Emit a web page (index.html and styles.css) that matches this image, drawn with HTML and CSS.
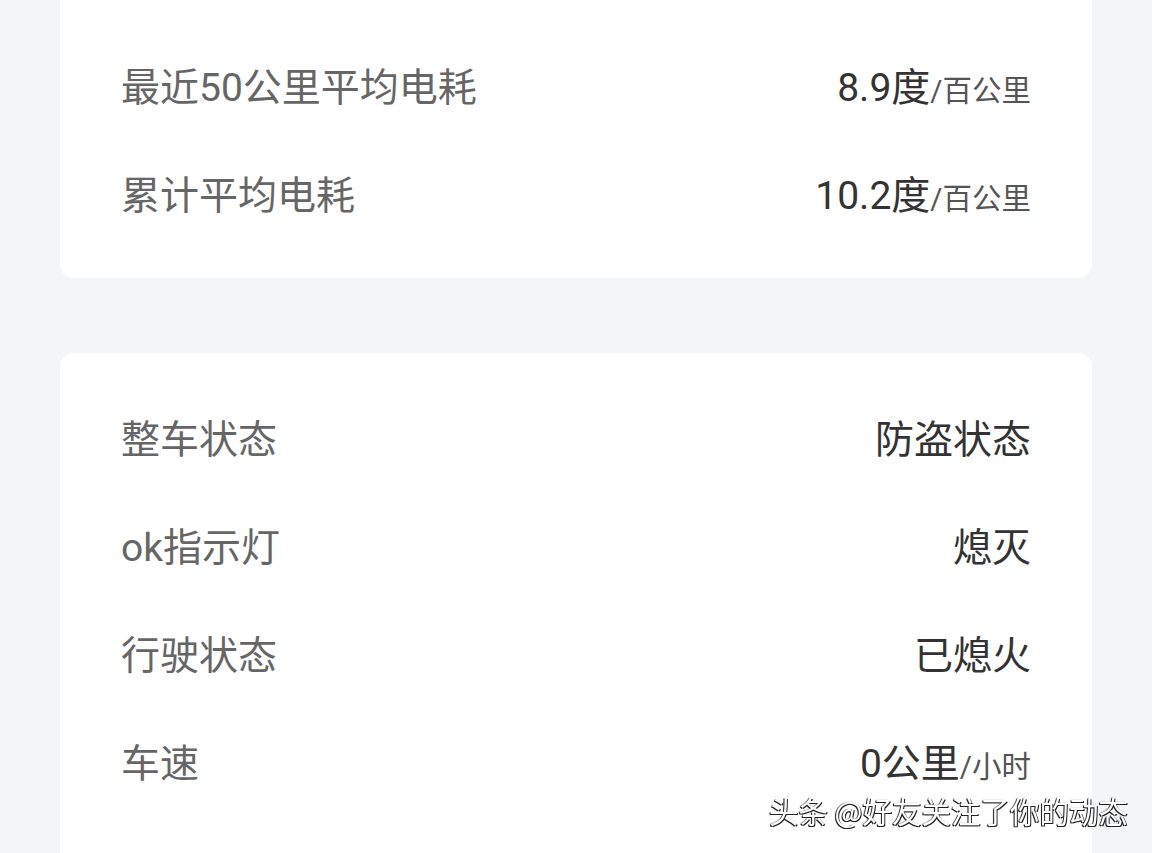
FILE: index.html
```html
<!DOCTYPE html>
<html lang="zh-CN">
<head>
<meta charset="utf-8">
<title>车辆状态</title>
<link rel="stylesheet" href="styles.css">
</head>
<body>
<main class="page">
  <section class="card card-first">
    <div class="row">
      <span class="label">最近50公里平均电耗</span>
      <span class="value">8.9度<small class="unit">/百公里</small></span>
    </div>
    <div class="row">
      <span class="label">累计平均电耗</span>
      <span class="value">10.2度<small class="unit">/百公里</small></span>
    </div>
  </section>

  <section class="card card-status">
    <div class="row">
      <span class="label">整车状态</span>
      <span class="value">防盗状态</span>
    </div>
    <div class="row">
      <span class="label">ok指示灯</span>
      <span class="value">熄灭</span>
    </div>
    <div class="row">
      <span class="label">行驶状态</span>
      <span class="value">已熄火</span>
    </div>
    <div class="row">
      <span class="label">车速</span>
      <span class="value">0公里<small class="unit">/小时</small></span>
    </div>
  </section>
</main>
<div class="watermark">头条 @好友关注了你的动态</div>
</body>
</html>
```

FILE: styles.css
```css
html, body {
  margin: 0;
  padding: 0;
  height: 100%;
  overflow: hidden;
  background: #f4f5f7;
  font-family: Roboto, "Noto Sans CJK SC", sans-serif;
}

.page {
  display: flex;
  flex-direction: column;
  gap: 75px;
  padding: 0 60px;
}

.card {
  background: #ffffff;
  border-radius: 14px;
  padding: 33px 61px 28px;
}

.card-first {
  border-top-left-radius: 0;
  border-top-right-radius: 0;
  padding-top: 34px;
}

.card-status {
  padding-bottom: 80px;
}

.row {
  display: flex;
  justify-content: space-between;
  align-items: center;
  height: 108px;
}

.label {
  font-size: 39px;
  color: #666666;
  line-height: 1;
}

.value {
  font-size: 39px;
  color: #333333;
  line-height: 1;
}

.unit {
  font-size: 29.5px;
  color: #555555;
}

.watermark {
  position: fixed;
  right: 24px;
  bottom: 22px;
  font-family: "Noto Sans CJK SC", sans-serif;
  font-size: 29.5px;
  color: #ffffff;
  text-shadow: -1px 1px 0 #222, 1px 1px 0 #222, -1px 0 1px rgba(0,0,0,0.6);
}
```
